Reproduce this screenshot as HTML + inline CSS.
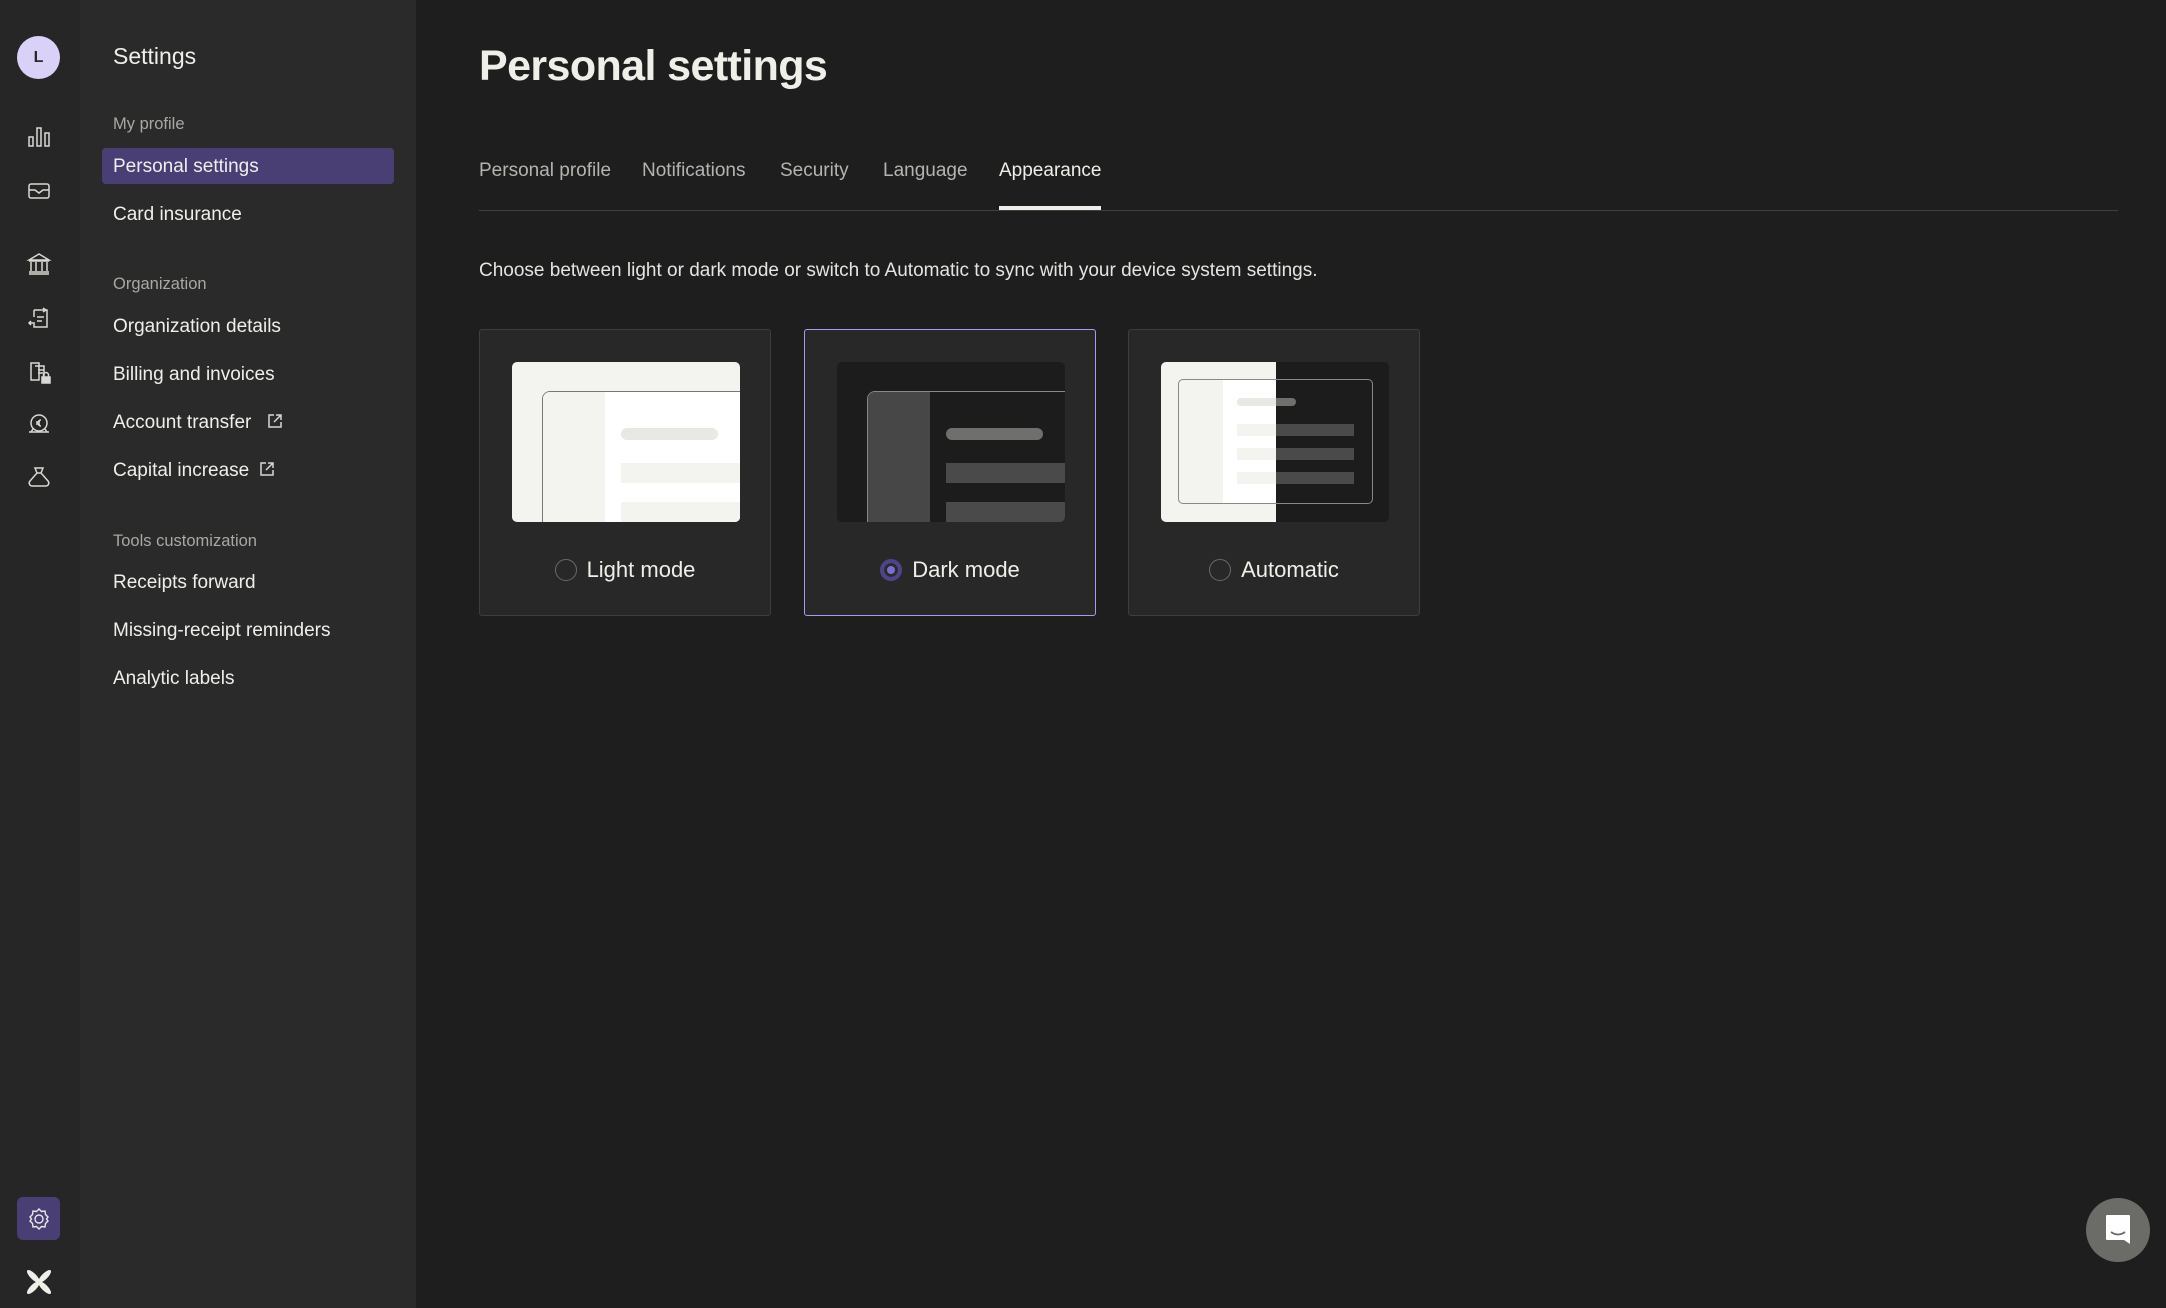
<!DOCTYPE html>
<html><head><meta charset="utf-8"><style>
*{margin:0;padding:0;box-sizing:border-box}
body{width:2166px;height:1308px;background:#1e1e1e;font-family:"Liberation Sans",sans-serif;position:relative;overflow:hidden;color:#efefea}
.abs{position:absolute}
#rail{left:0;top:0;width:80px;height:1308px;background:#262626}
#side{left:80px;top:0;width:336px;height:1308px;background:#2a2a2a}
.t{position:absolute;white-space:nowrap;line-height:1}
.hdr{font-size:16.5px;color:#a8a8a4}
.it{font-size:19px;color:#efefea}
.ic{position:absolute;left:25px;width:28px;height:28px}
.tab{font-size:19px;color:#b4b4b0;top:161px}
.card{position:absolute;top:329px;width:292px;height:287px;background:#282828;border:1.5px solid #3d3d3d;border-radius:3px}
.pv{position:absolute;left:32px;top:32px;width:228px;height:160px;border-radius:5px;overflow:hidden}
.lbl{position:absolute;top:227px;left:0;width:100%;text-align:center;font-size:22px;color:#efefea}
.rad{display:inline-block;width:22px;height:22px;border-radius:50%;border:1.5px solid #6a6a66;vertical-align:-4px;margin-right:10px}
</style></head><body>
<div id="rail" class="abs"></div>
<div id="side" class="abs"></div>
<div class="abs" style="left:17px;top:36px;width:43px;height:43px;border-radius:50%;background:#d9d1f7;color:#2a2a2a;font-size:16px;font-weight:bold;text-align:center;line-height:43px">L</div>

<svg class="ic" style="top:123px" viewBox="0 0 28 28" fill="none" stroke="#d8d8d4" stroke-width="1.5"><rect x="4" y="14" width="4" height="9"/><rect x="12" y="5" width="4" height="18"/><rect x="20" y="10" width="4" height="13"/></svg>
<svg class="ic" style="top:177px" viewBox="0 0 28 28" fill="none" stroke="#d8d8d4" stroke-width="1.5"><rect x="4" y="7" width="20" height="14" rx="2"/><path d="M4 13h6l4 3 4-3h6"/></svg>
<svg class="ic" style="top:250px" viewBox="0 0 28 28" fill="none" stroke="#d8d8d4" stroke-width="1.5"><path d="M4 10L14 4l10 6z M4 11h20 M6 12v9 M11 12v9 M17 12v9 M22 12v9 M4 22h20 M4 24h20"/></svg>
<svg class="ic" style="top:304px" viewBox="0 0 28 28" fill="none" stroke="#d8d8d4" stroke-width="1.5"><path d="M9 6h13v17H9v-3 M9 6v7 M12 13h7 M12 17h5 M4 19h6 M6 17l-2 2 2 2 M18 4l3 2-3 2"/></svg>
<svg class="ic" style="top:358px" viewBox="0 0 28 28" fill="none" stroke="#d8d8d4" stroke-width="1.5"><path d="M6 5h8v17H6z M10 8h9v11 M13 12h6 M13 15h5"/><rect x="17" y="19" width="8" height="6" fill="#d8d8d4"/><path d="M18.5 19v-2a2.5 2.5 0 015 0v2"/></svg>
<svg class="ic" style="top:410px" viewBox="0 0 28 28" fill="none" stroke="#d8d8d4" stroke-width="1.5"><circle cx="14" cy="13" r="8"/><path d="M4 22h20 M6 22l2-3 M22 22l-2-3 M16 10a3 3 0 100 6 M11 12h4 M11 14h4"/></svg>
<svg class="ic" style="top:463px" viewBox="0 0 28 28" fill="none" stroke="#d8d8d4" stroke-width="1.5"><path d="M10 5h8l-2 5 7 8a3 3 0 01-2 5H7a3 3 0 01-2-5l7-8z M12 10h4"/></svg>

<div class="abs" style="left:17px;top:1197px;width:43px;height:43px;border-radius:6px;background:#4a3f75"></div>
<svg class="abs" style="left:25px;top:1205px" width="28" height="28" viewBox="0 0 28 28" fill="none" stroke="#e8e8e4" stroke-width="1.4"><path d="M14 4l2.5 2.5 3.5-.5.5 3.5L23 12l-1.5 2 1.5 2-2.5 2.5-.5 3.5-3.5-.5L14 24l-2.5-2.5-3.5.5-.5-3.5L5 16l1.5-2L5 12l2.5-2.5.5-3.5 3.5.5z"/><circle cx="14" cy="14" r="4"/></svg>
<svg class="abs" style="left:26px;top:1269px" width="26" height="26" viewBox="0 0 26 26" fill="#efefea"><g transform="translate(13 13)"><ellipse rx="8.5" ry="3" transform="rotate(45) translate(8 0)"/><ellipse rx="8.5" ry="3" transform="rotate(135) translate(8 0)"/><ellipse rx="8.5" ry="3" transform="rotate(225) translate(8 0)"/><ellipse rx="8.5" ry="3" transform="rotate(315) translate(8 0)"/></g></svg>

<div class="t" style="left:113px;top:45px;font-size:23px">Settings</div>
<div class="t hdr" style="left:113px;top:116px">My profile</div>
<div class="abs" style="left:102px;top:148px;width:292px;height:36px;border-radius:4px;background:#4a3f75"></div>
<div class="t it" style="left:113px;top:157px">Personal settings</div>
<div class="t it" style="left:113px;top:205px">Card insurance</div>
<div class="t hdr" style="left:113px;top:276px">Organization</div>
<div class="t it" style="left:113px;top:317px">Organization details</div>
<div class="t it" style="left:113px;top:365px">Billing and invoices</div>
<div class="t it" style="left:113px;top:413px">Account transfer</div>
<div class="t it" style="left:113px;top:461px">Capital increase</div>
<svg class="abs" style="left:267px;top:413px" width="16" height="16" viewBox="0 0 16 16" fill="none" stroke="#d8d8d4" stroke-width="1.5"><path d="M7 2H2v12h12V9 M9 2h5v5 M14 2L7 9"/></svg>
<svg class="abs" style="left:259px;top:461px" width="16" height="16" viewBox="0 0 16 16" fill="none" stroke="#d8d8d4" stroke-width="1.5"><path d="M7 2H2v12h12V9 M9 2h5v5 M14 2L7 9"/></svg>
<div class="t hdr" style="left:113px;top:533px">Tools customization</div>
<div class="t it" style="left:113px;top:573px">Receipts forward</div>
<div class="t it" style="left:113px;top:621px">Missing-receipt reminders</div>
<div class="t it" style="left:113px;top:669px">Analytic labels</div>

<div class="t" style="left:479px;top:45px;font-size:43px;font-weight:bold;letter-spacing:-0.6px;color:#efefea">Personal settings</div>
<div class="t tab" style="left:479px">Personal profile</div>
<div class="t tab" style="left:642px">Notifications</div>
<div class="t tab" style="left:780px">Security</div>
<div class="t tab" style="left:883px">Language</div>
<div class="t tab" style="left:999px;color:#efefea">Appearance</div>
<div class="abs" style="left:479px;top:210px;width:1639px;height:1px;background:#404040"></div>
<div class="abs" style="left:999px;top:206px;width:102px;height:4px;background:#efefea"></div>
<div class="t" style="left:479px;top:261px;font-size:19px;color:#e4e4e0">Choose between light or dark mode or switch to Automatic to sync with your device system settings.</div>

<div class="card" style="left:479px">
 <div class="pv" style="background:#f3f3f0">
  <div class="abs" style="left:30px;top:29px;width:220px;height:150px;border:1.5px solid #777;border-radius:8px;background:#fff;overflow:hidden">
   <div class="abs" style="left:0;top:0;width:62px;height:150px;background:#f3f3f0"></div>
   <div class="abs" style="left:78px;top:36px;width:97px;height:12px;border-radius:6px;background:#e8e8e4"></div>
   <div class="abs" style="left:78px;top:71px;width:150px;height:20px;background:#f3f3f0"></div>
   <div class="abs" style="left:78px;top:110px;width:150px;height:30px;background:#f3f3f0"></div>
  </div>
 </div>
 <div class="lbl"><span class="rad"></span>Light mode</div>
</div>
<div class="card" style="left:804px;border-color:#a99af0">
 <div class="pv" style="background:#1c1c1c">
  <div class="abs" style="left:30px;top:29px;width:220px;height:150px;border:1.5px solid #888;border-radius:8px;background:#1c1c1c;overflow:hidden">
   <div class="abs" style="left:0;top:0;width:62px;height:150px;background:#474747"></div>
   <div class="abs" style="left:78px;top:36px;width:97px;height:12px;border-radius:6px;background:#6f6f6d"></div>
   <div class="abs" style="left:78px;top:71px;width:150px;height:20px;background:#4a4a4a"></div>
   <div class="abs" style="left:78px;top:110px;width:150px;height:30px;background:#4a4a4a"></div>
  </div>
 </div>
 <div class="lbl"><span class="rad" style="border:4px solid #4e4488;background:#7d6ed6;box-shadow:inset 0 0 0 3px #2a2a2a"></span>Dark mode</div>
</div>
<div class="card" style="left:1128px">
 <div class="pv" style="background:linear-gradient(90deg,#f3f3f0 115px,#1c1c1c 115px)">
  <div class="abs" style="left:17px;top:17px;width:195px;height:125px;border:1.5px solid #888;border-radius:5px;overflow:hidden;background:linear-gradient(90deg,#f3f3f0 44px,#fff 44px,#fff 97px,#1c1c1c 97px)">
   <div class="abs" style="left:58px;top:18px;width:59px;height:8px;border-radius:4px;background:linear-gradient(90deg,#e8e8e4 39px,#6f6f6d 39px)"></div>
   <div class="abs" style="left:58px;top:44px;width:117px;height:12px;background:linear-gradient(90deg,#f3f3f0 39px,#4a4a4a 39px)"></div>
   <div class="abs" style="left:58px;top:68px;width:117px;height:12px;background:linear-gradient(90deg,#f3f3f0 39px,#4a4a4a 39px)"></div>
   <div class="abs" style="left:58px;top:92px;width:117px;height:12px;background:linear-gradient(90deg,#f3f3f0 39px,#4a4a4a 39px)"></div>
  </div>
 </div>
 <div class="lbl"><span class="rad"></span>Automatic</div>
</div>

<div class="abs" style="left:2086px;top:1198px;width:64px;height:64px;border-radius:50%;background:#6b6b68"></div>
<svg class="abs" style="left:2104px;top:1213px" width="28" height="34" viewBox="0 0 28 34" fill="#fff"><path d="M3 2h22a1 1 0 011 1v28l-6-4H3a1 1 0 01-1-1V3a1 1 0 011-1z"/><path d="M7 19q7 5 14 0" stroke="#6b6b68" stroke-width="1.8" fill="none"/></svg>
</body></html>
